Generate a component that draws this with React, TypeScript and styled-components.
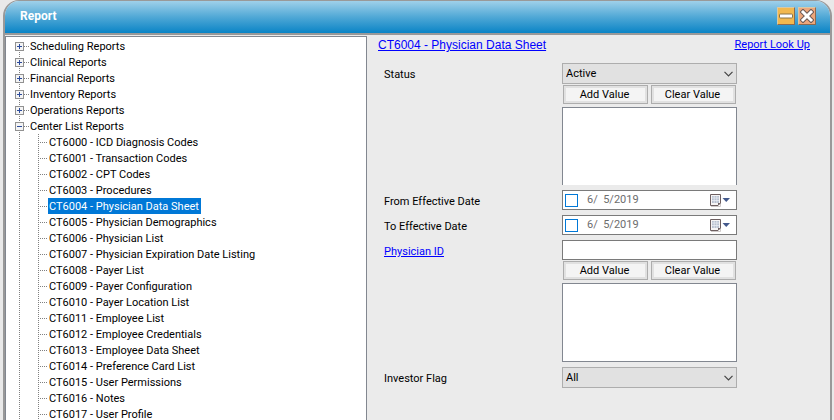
import React from "react";
import styled, { createGlobalStyle, css } from "styled-components";

const uiFont = 'Roboto, "Liberation Sans", sans-serif';

const GlobalStyle = createGlobalStyle`
  *, *::before, *::after { box-sizing: border-box; }
  body { margin: 0; background: #e9e9e9; }
  button, input, select, textarea { font: inherit; color: inherit; border-radius: 0; margin: 0; }
`;

const Frame = styled.div`
  height: 100vh;
  padding: 0 2px 0 3px;
  background: #e9e9e9;
  font: 11px/16px ${uiFont};
  color: #000;
`;

const Window = styled.div`
  height: 100%;
  display: flex;
  flex-direction: column;
  overflow: hidden;
  border: solid #999;
  border-width: 1px 2px 0 2px;
  border-radius: 16px 16px 0 0;
  background: #ebebeb;
`;

const TitleBar = styled.header`
  flex: none;
  height: 34px;
  display: flex;
  align-items: center;
  gap: 3px;
  padding: 0 14px 2px 15px;
  border-bottom: 2px solid #999;
  background: linear-gradient(#9fd0ea, #50a8d6 50%, #0a84c6);
`;

const Title = styled.h1`
  flex: 1;
  margin: 0;
  color: #fff;
  font: bold 12px/16px ${uiFont};
`;

const CaptionButton = styled.button<{ $tone: string }>`
  width: 18px;
  height: 18px;
  padding: 0;
  display: grid;
  place-items: center;
  background: ${(p) => p.$tone};
  border: 1px solid;
  border-color: #d8c9a6 #8a6a50 #8a6a50 #d8c9a6;
`;

const Body = styled.div`
  flex: 1;
  min-height: 0;
  display: flex;
  padding-top: 1px;
`;

const TreePane = styled.nav`
  flex: 0 0 362px;
  overflow: hidden;
  padding: 1px 0 0 9px;
  background: #fff;
  border: solid #828790;
  border-width: 1px 1px 0 1px;
`;

const TreeList = styled.ul`
  list-style: none;
  margin: 0;
  padding: 0;
`;

const TreeNode = styled.li`
  background: repeating-linear-gradient(#808080 0 1px, transparent 1px 2px) 4px 0 / 1px 100% no-repeat;
  &:first-child { background-position: 4px 8px; }
`;

const NodeRow = styled.div`
  height: 16px;
  display: flex;
  align-items: center;
`;

const Expander = styled.button`
  width: 9px;
  height: 9px;
  padding: 0;
  border: 0;
  background: none;
  display: block;
  svg { display: block; }
`;

const Stub = styled.span<{ $width: number }>`
  width: ${(p) => p.$width}px;
  height: 1px;
  background: repeating-linear-gradient(90deg, #808080 0 1px, transparent 1px 2px);
`;

const NodeLabel = styled.span<{ $selected?: boolean }>`
  padding: 2px 2px 0 1px;
  line-height: 14px;
  white-space: nowrap;
  ${(p) => p.$selected && css`
    background: #0078d7;
    color: #fff;
  `}
`;

const ChildList = styled(TreeList)`
  margin-left: 23px;
  background: repeating-linear-gradient(#808080 0 1px, transparent 1px 2px) 0 0 / 1px 100% no-repeat;
`;

const ReportPane = styled.main`
  flex: 1;
  min-width: 0;
  padding: 1px 20px 0 11px;
`;

const Link = styled.a`
  color: #0000ff;
  text-decoration: underline;
`;

const ReportHeader = styled.div`
  display: flex;
  justify-content: space-between;
  align-items: center;
`;

const ReportTitle = styled(Link)`
  font: 12px/16px "Liberation Sans", Arial, sans-serif;
`;

const Form = styled.form`
  display: grid;
  grid-template-columns: 178px 175px;
  row-gap: 5px;
  padding: 10px 0 0 6px;
`;

const FieldLabel = styled.label`
  padding-top: 4px;
`;

const LabelCell = styled.div`
  padding-top: 4px;
`;

const Control = styled.div`
  display: flex;
  flex-direction: column;
`;

const SelectBox = styled.div`
  display: grid;
  align-items: center;
  > * { grid-area: 1 / 1; }
  svg { justify-self: end; margin-right: 4px; pointer-events: none; }
`;

const Select = styled.select`
  appearance: none;
  width: 100%;
  height: 21px;
  padding: 1px 20px 0 3px;
  border: 1px solid #adadad;
  background: #e1e1e1;
`;

const ButtonRow = styled.div`
  display: flex;
  gap: 3px;
  padding: 1px 1px 3px;
`;

const ValueButton = styled.button`
  flex: 1;
  height: 19px;
  padding: 1px 2px 0 0;
  line-height: 16px;
  border: 1px solid #adadad;
  background: #f4f4f4;
  box-shadow: inset 0 0 0 2px #e1e1e1;
`;

const ValueList = styled.textarea<{ $open?: boolean }>`
  display: block;
  width: 100%;
  height: ${(p) => (p.$open ? 78 : 79)}px;
  resize: none;
  outline: none;
  border: 1px solid #828790;
  border-bottom-width: ${(p) => (p.$open ? 0 : 1)}px;
  background: #fff;
`;

const TextBox = styled.input`
  width: 100%;
  height: 20px;
  padding: 0 3px;
  border: 1px solid #7a7a7a;
  background: #fff;
`;

const DateBox = styled.div`
  display: flex;
  align-items: center;
  height: 20px;
  padding: 0 6px 0 2px;
  border: 1px solid #7a7a7a;
  background: #fff;
`;

const DateCheck = styled.input`
  appearance: none;
  flex: none;
  width: 13px;
  height: 13px;
  border: 1px solid #0078d7;
  background: #fff;
`;

const DateText = styled.input`
  flex: 1;
  min-width: 0;
  padding: 0 0 0 9px;
  border: 0;
  background: none;
  color: #6d6d6d;
`;

const CalendarButton = styled.button`
  padding: 0;
  border: 0;
  background: none;
  display: flex;
`;

function Toggle({ open, name }: { open: boolean; name: string }) {
  return (
    <Expander type="button" aria-expanded={open} aria-label={name}>
      <svg width="9" height="9" shapeRendering="crispEdges">
        <rect x="0.5" y="0.5" width="8" height="8" fill="#f4f4f4" stroke="#919191" />
        <path d={open ? "M2 4.5h5" : "M2 4.5h5M4.5 2v5"} stroke="#2b4a9b" />
      </svg>
    </Expander>
  );
}

function DropDown({ id, value, options }: { id: string; value: string; options: string[] }) {
  return (
    <SelectBox>
      <Select id={id} defaultValue={value}>
        {options.map((o) => <option key={o}>{o}</option>)}
      </Select>
      <svg width="9" height="6" viewBox="0 0 9 6">
        <path d="M0.5 0.8L4.5 4.8L8.5 0.8" fill="none" stroke="#444" strokeWidth="1.2" />
      </svg>
    </SelectBox>
  );
}

function ValueButtons() {
  return (
    <ButtonRow>
      <ValueButton type="button">Add Value</ValueButton>
      <ValueButton type="button">Clear Value</ValueButton>
    </ButtonRow>
  );
}

function DateField({ id, label }: { id: string; label: string }) {
  return (
    <>
      <FieldLabel htmlFor={id}>{label}</FieldLabel>
      <DateBox>
        <DateCheck type="checkbox" aria-label={`Use ${label}`} />
        <DateText id={id} defaultValue="6/  5/2019" />
        <CalendarButton type="button" aria-label={`Pick ${label}`}>
          <svg width="20" height="13" viewBox="0 0 20 13">
            <path d="M1 12.5h9.5V3" fill="none" stroke="#cfcaca" />
            <path d="M0.5 0.5h10v8.5l-2.5 2.5H0.5z" fill="#f7f5f5" stroke="#6d5f60" />
            <path d="M2 2h7v7H2z" fill="#b9c1d0" />
            <path d="M2 4h7M2 6.5h7M4.2 2v7M6.8 2v7" stroke="#eef1f6" strokeWidth="0.7" />
            <path d="M8 11.5V9h2.5z" fill="#6d5f60" />
            <path d="M12.5 4h7.5l-3.75 4z" fill="#43598c" />
          </svg>
        </CalendarButton>
      </DateBox>
    </>
  );
}

const closedGroups = [
  "Scheduling Reports",
  "Clinical Reports",
  "Financial Reports",
  "Inventory Reports",
  "Operations Reports",
];

const centerListReports = [
  "CT6000 - ICD Diagnosis Codes",
  "CT6001 - Transaction Codes",
  "CT6002 - CPT Codes",
  "CT6003 - Procedures",
  "CT6004 - Physician Data Sheet",
  "CT6005 - Physician Demographics",
  "CT6006 - Physician List",
  "CT6007 - Physician Expiration Date Listing",
  "CT6008 - Payer List",
  "CT6009 - Payer Configuration",
  "CT6010 - Payer Location List",
  "CT6011 - Employee List",
  "CT6012 - Employee Credentials",
  "CT6013 - Employee Data Sheet",
  "CT6014 - Preference Card List",
  "CT6015 - User Permissions",
  "CT6016 - Notes",
  "CT6017 - User Profile",
];

const selectedReport = "CT6004 - Physician Data Sheet";

export default function App() {
  return (
    <Frame>
      <GlobalStyle />
      <Window>
        <TitleBar>
          <Title>Report</Title>
          <CaptionButton type="button" aria-label="Minimize" $tone="#f2b84e">
            <svg width="14" height="6" viewBox="0 0 14 6">
              <rect x="0.5" y="1" width="13" height="4" rx="1" fill="#fff" stroke="#8a7448" />
            </svg>
          </CaptionButton>
          <CaptionButton type="button" aria-label="Close" $tone="#eda77c">
            <svg width="14" height="14" viewBox="0 0 14 14">
              <path d="M3 3L11 11M11 3L3 11" stroke="#6b5a55" strokeWidth="5" strokeLinecap="square" />
              <path d="M3 3L11 11M11 3L3 11" stroke="#fff" strokeWidth="3" strokeLinecap="square" />
            </svg>
          </CaptionButton>
        </TitleBar>
        <Body>
          <TreePane aria-label="Reports">
            <TreeList>
              {closedGroups.map((name) => (
                <TreeNode key={name}>
                  <NodeRow>
                    <Toggle open={false} name={name} />
                    <Stub $width={5} />
                    <NodeLabel>{name}</NodeLabel>
                  </NodeRow>
                </TreeNode>
              ))}
              <TreeNode>
                <NodeRow>
                  <Toggle open name="Center List Reports" />
                  <Stub $width={5} />
                  <NodeLabel>Center List Reports</NodeLabel>
                </NodeRow>
                <ChildList>
                  {centerListReports.map((name) => (
                    <li key={name}>
                      <NodeRow>
                        <Stub $width={10} />
                        <NodeLabel $selected={name === selectedReport}>{name}</NodeLabel>
                      </NodeRow>
                    </li>
                  ))}
                </ChildList>
              </TreeNode>
            </TreeList>
          </TreePane>
          <ReportPane>
            <ReportHeader>
              <ReportTitle href="#report">{selectedReport}</ReportTitle>
              <Link href="#lookup">Report Look Up</Link>
            </ReportHeader>
            <Form>
              <FieldLabel htmlFor="status">Status</FieldLabel>
              <Control>
                <DropDown id="status" value="Active" options={["Active", "Inactive", "All"]} />
                <ValueButtons />
                <ValueList $open readOnly aria-label="Status values" />
              </Control>
              <DateField id="from-date" label="From Effective Date" />
              <DateField id="to-date" label="To Effective Date" />
              <LabelCell>
                <Link href="#physician" id="physician-label">Physician ID</Link>
              </LabelCell>
              <Control>
                <TextBox type="text" aria-labelledby="physician-label" />
                <ValueButtons />
                <ValueList readOnly aria-label="Physician ID values" />
              </Control>
              <FieldLabel htmlFor="investor">Investor Flag</FieldLabel>
              <DropDown id="investor" value="All" options={["All", "Yes", "No"]} />
            </Form>
          </ReportPane>
        </Body>
      </Window>
    </Frame>
  );
}
